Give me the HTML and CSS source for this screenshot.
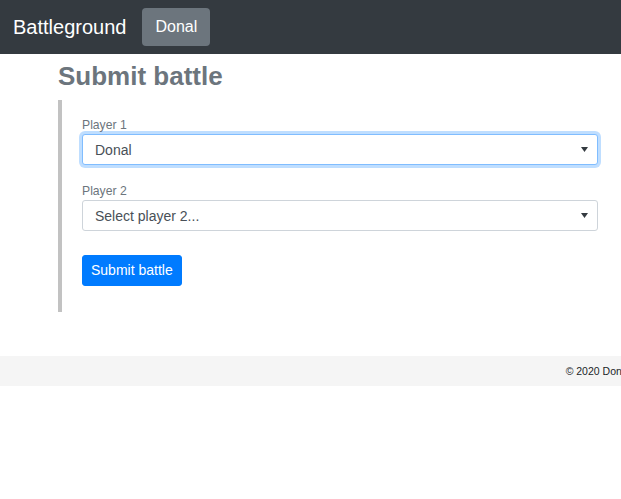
FILE: index.html
```html
<!DOCTYPE html>
<html lang="en">
<head>
<meta charset="utf-8">
<title>Battleground</title>
<link rel="stylesheet" href="styles.css">
</head>
<body>
<nav class="navbar">
  <span class="brand">Battleground</span>
  <span class="nav-btn">Donal</span>
</nav>
<main class="container">
  <h3 class="page-title">Submit battle</h3>
  <div class="battle-box">
    <div class="form-group">
      <label class="field-label">Player 1</label>
      <div class="select focused">
        <span class="select-text">Donal</span>
        <svg class="caret" width="7" height="5" viewBox="0 0 7 5"><path d="M0 0H7L3.5 5Z" fill="#343a40"/></svg>
      </div>
    </div>
    <div class="form-group">
      <label class="field-label">Player 2</label>
      <div class="select">
        <span class="select-text">Select player 2...</span>
        <svg class="caret" width="7" height="5" viewBox="0 0 7 5"><path d="M0 0H7L3.5 5Z" fill="#343a40"/></svg>
      </div>
    </div>
    <div class="actions">
      <button class="btn-primary">Submit battle</button>
    </div>
  </div>
</main>
<footer class="footer">
  <span class="footer-text">© 2020 Donal</span>
</footer>
</body>
</html>
```
FILE: styles.css
```css
html, body {
  margin: 0;
  padding: 0;
  background: #fff;
  font-family: "Liberation Sans", Arial, sans-serif;
  overflow-x: hidden;
}

.navbar {
  background: #343a40;
  height: 54px;
  display: flex;
  align-items: center;
  padding: 0 13px;
  box-sizing: border-box;
  gap: 16px;
}

.brand {
  color: #fff;
  font-size: 20px;
  line-height: 30px;
}

.nav-btn {
  background: #6c757d;
  color: #fff;
  font-size: 16px;
  line-height: 24px;
  padding: 7px 13px;
  border-radius: 4px;
}

.container {
  padding: 0 23px 0 58px;
}

.page-title {
  margin: 7px 0 8px;
  font-size: 26px;
  line-height: 31px;
  font-weight: bold;
  color: #6c757d;
}

.battle-box {
  border-left: 4px solid #c2c2c2;
  padding: 16px 0 26px 20px;
}

.form-group {
  margin-bottom: 17px;
}

.field-label {
  display: block;
  font-size: 12.2px;
  line-height: 18px;
  color: #6c757d;
}

.select {
  height: 31px;
  box-sizing: border-box;
  border: 1px solid #ced4da;
  border-radius: 3px;
  display: flex;
  align-items: center;
  justify-content: space-between;
  padding: 0 9px 0 12px;
  background: #fff;
}

.select.focused {
  border-color: #80bdff;
  box-shadow: 0 0 0 3px rgba(0, 123, 255, 0.25);
}

.select-text {
  font-size: 14px;
  color: #495057;
}

.caret {
  display: block;
}

.actions {
  padding-top: 7px;
}

.btn-primary {
  background: #007bff;
  border: 1px solid #007bff;
  color: #fff;
  font-family: "Liberation Sans", Arial, sans-serif;
  font-size: 14px;
  line-height: 21px;
  padding: 4px 8px;
  border-radius: 3px;
  display: block;
}

.footer {
  margin-top: 44px;
  height: 30px;
  background: #f5f5f5;
  display: flex;
  align-items: center;
  justify-content: flex-end;
  overflow: hidden;
}

.footer-text {
  font-size: 10.5px;
  color: #212529;
  white-space: nowrap;
  margin-right: -9px;
}
```
